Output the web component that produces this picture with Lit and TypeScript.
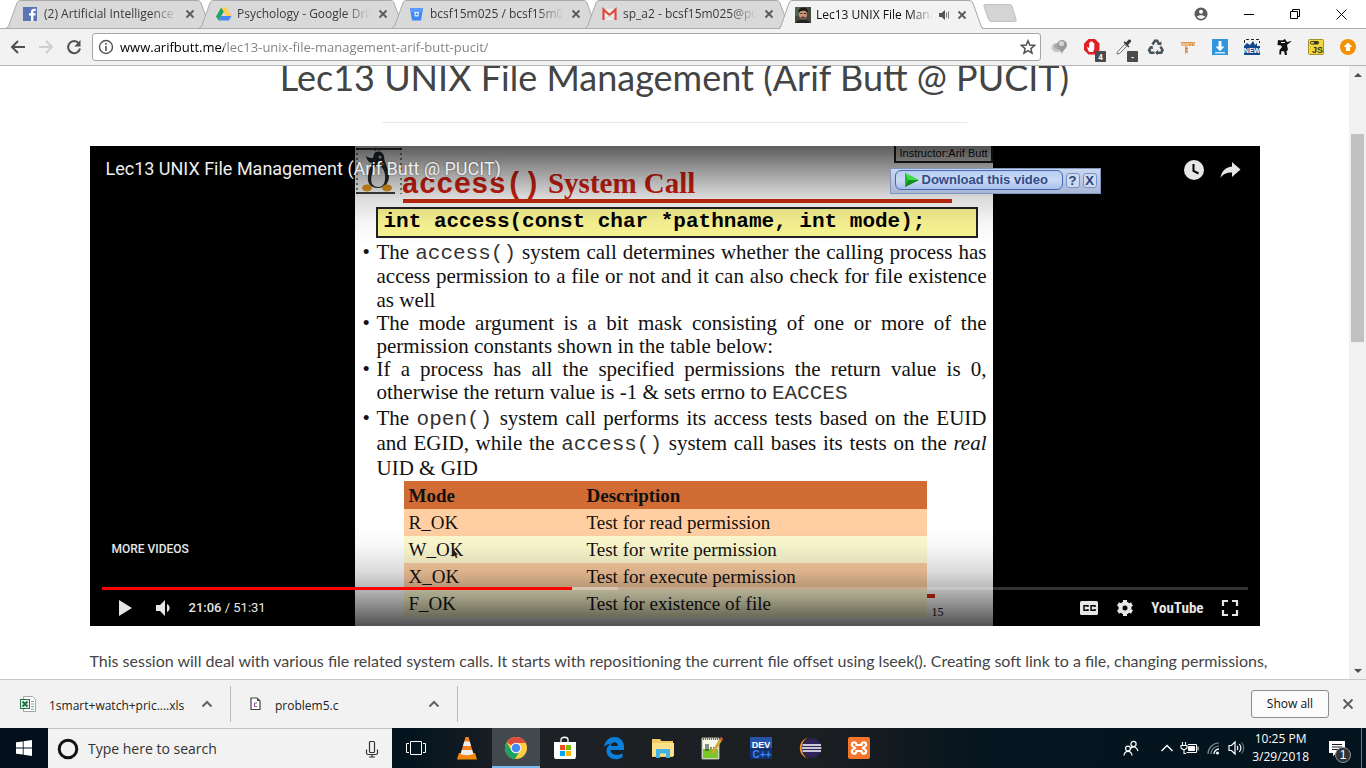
import { LitElement, html, css, svg, TemplateResult } from "lit";
import { customElement } from "lit/decorators.js";
import { classMap } from "lit/directives/class-map.js";
import { styleMap } from "lit/directives/style-map.js";

const icon = (w: number, h: number, body: TemplateResult) => html`
  <svg width=${w} height=${h} viewBox="0 0 ${w} ${h}" aria-hidden="true">${body}</svg>`;

const closeIcon = icon(10, 10, svg`<path d="M1.5 1.5l7 7M8.5 1.5l-7 7" stroke="#5a5a5a" stroke-width="1.8" fill="none"/>`);
const chevronUp = icon(12, 8, svg`<path d="M1.5 6.5L6 2l4.5 4.5" stroke="#5f6368" stroke-width="2" fill="none"/>`);

interface Tab {
  title: string;
  icon: TemplateResult;
  active?: boolean;
}

const tabs: Tab[] = [
  {
    title: "(2) Artificial Intelligence S",
    icon: icon(16, 16, svg`<rect y="1" width="14" height="14" fill="#5b74b4"/><path d="M8 15V9.500H6V7.300h2V5.600C8 3.700 9.200 2.800 11 2.800h1.800v2.200H11.500c-.8 0-1.100.4-1.100 1.100v1.200h2.300l-.3 2.200h-2V15z" fill="#fff"/>`),
  },
  {
    title: "Psychology - Google Drive",
    icon: icon(16, 16, svg`<path d="M5.200 1.500h5L15.500 10h-5z" fill="#ffd04b"/><path d="M5.200 1.500L0 10.500l2.500 4L7.800 5.700z" fill="#1fa463"/><path d="M5.200 10h10.300l-2.600 4.500H2.500z" fill="#4688f4"/>`),
  },
  {
    title: "bcsf15m025 / bcsf15m025",
    icon: icon(16, 16, svg`<path d="M1 2h13l-2 12.500H3z" fill="#3f86f7"/><path d="M1 2h13l-.8 4H1.700z" fill="#5b9bff"/><path d="M5 6h5.200l-.8 4.500H5.800z" fill="#dbe8ff"/><path d="M6.500 7.500h2.300l-.4 1.500H6.900z" fill="#2d6fe0"/>`),
  },
  {
    title: "sp_a2 - bcsf15m025@pucit",
    icon: icon(16, 16, svg`<path d="M1 3h13v11H1z" fill="#eee"/><path d="M1.500 14V3.500l6 5.500 6-5.500V14" fill="none" stroke="#dc4b3e" stroke-width="2.200"/><path d="M3 13l4.500-3.500L12 13" fill="none" stroke="#cfcfcf"/>`),
  },
  {
    title: "Lec13 UNIX File Management",
    active: true,
    icon: icon(16, 16, svg`<rect width="16" height="16" fill="#434a3c"/><rect width="6" height="9" fill="#56634d"/><ellipse cx="8" cy="7.500" rx="4" ry="5" fill="#c79479"/><path d="M3.500 6C3 2 5.500.8 8.300.8s5 1.500 4.200 5.200C11.500 4 10 3.700 8 3.800S4.500 4.300 3.500 6z" fill="#1d1714"/><path d="M5.800 10c1.500-.8 3-.8 4.400 0v1.200c-1.400.7-3 .7-4.400 0z" fill="#5c3f33"/><path d="M1 16c.5-2.500 3-3.300 7-3.300s6.500.8 7 3.300z" fill="#262024"/><path d="M5.500 6.500h2M9 6.500h2" stroke="#33211b"/>`),
  },
];

const extensions: { name: string; badge?: string; icon: TemplateResult }[] = [
  {
    name: "Places",
    icon: icon(18, 18, svg`<ellipse cx="6" cy="9.500" rx="5.500" ry="4.800" fill="#c9c9c9"/><ellipse cx="7" cy="8.500" rx="4" ry="3" fill="#a9a9a9"/><path d="M11 2a5 5 0 0 1 5 5c0 3.500-4 4.500-5 9-1.500-4.500-5-5.500-5-9a5 5 0 0 1 5-5z" fill="#9a9a9a"/><circle cx="10.500" cy="5.500" r="2.600" fill="#d2d2d2"/>`),
  },
  {
    name: "Ad blocker",
    badge: "4",
    icon: icon(18, 18, svg`<path d="M5.500 1h6.500l4.500 4.500V12L12 16.500H5.500L1 12V5.500z" fill="#e01f26"/><path d="M6 14L4 9.500l1-.5 1.200 1.500V4.500h1.200V8V3.500h1.300V8V3.800H10V8.300V5h1.300v6L10 14z" fill="#fff"/>`),
  },
  {
    name: "Colour picker",
    badge: "-",
    icon: icon(18, 18, svg`<path d="M2 16l.6-2.500 7-7 2 2-7 7z" fill="#eee" stroke="#777"/><path d="M8.500 4.500l5 5 1-1-1.500-1.500L15.800 4c1-1.500-.8-3.300-2.300-2.200L11 4.500 9.500 3.200z" fill="#3b3b3b"/>`),
  },
  {
    name: "Recycle",
    icon: icon(18, 18, svg`<g fill="none" stroke="#46545c" stroke-width="2.600"><path d="M5.500 6.500L8 2.800h2.200L12 5.800"/><path d="M13.500 8.500l2 3.700-1.300 2.600h-4"/><path d="M7.500 14.800H3.600l-1.500-2.500 2-3.500"/></g><path d="M10 6.800l4.300.4.200-4zM11 11.800v5.500l-3-2.600zM2 9.300l3.300-1.800 1 3.800z" fill="#46545c"/>`),
  },
  {
    name: "Page ruler",
    icon: icon(18, 18, svg`<path d="M2 4h14v4H9v7.500H6V8H2z" fill="#f0ba84"/><path d="M2 4h14v1H2zM6 8h1v7.500H6z" fill="#dd9350"/><path d="M11 6v1.500M13.500 6v1.500M7 10.500h1.500M7 13h1.500" stroke="#a8683a"/>`),
  },
  {
    name: "Downloader",
    icon: icon(18, 18, svg`<rect x="1" y="1" width="16" height="16" fill="#2f95dc"/><path d="M7.500 3h3v5.500h3L9 13.200 4.500 8.500h3z" fill="#fff"/><path d="M4 14.800h10" stroke="#fff" stroke-width="1.200"/>`),
  },
  {
    name: "Screenshot",
    icon: icon(18, 18, svg`<path d="M1.500 5V1.500h15V5" fill="none" stroke="#222" stroke-dasharray="3 2"/><path d="M1 8l3-3 3 2 3-4 2 4 2-2v3h3v9H1z" fill="#134a8e"/><text x="9" y="14.500" font-family="Liberation Sans" font-size="7" font-weight="bold" fill="#fff" text-anchor="middle">NEW</text>`),
  },
  {
    name: "Ninja",
    icon: icon(18, 18, svg`<path d="M3 2l4 .5L10 1l2 3 5-1-4 3-1 1 1 5-1.500 1 .5 4H9.800l-.6-3.500L6.500 13 6 16.500H4.300L4.500 12 7 9 6 7.500 2.500 7z" fill="#111"/><path d="M6 4.500h4" stroke="#f2f2f2"/>`),
  },
  {
    name: "Script switch",
    icon: icon(18, 18, svg`<rect x="1.500" y="1.500" width="15" height="15" rx="1" fill="#f1d63c" stroke="#a3912a"/><rect x="3" y="3" width="9" height="3.500" rx="1.700" fill="#3a3720"/><rect x="4" y="4" width="3" height="1.500" fill="#f1d63c"/><text x="10.500" y="15" font-family="Liberation Sans" font-size="9" font-weight="bold" fill="#37331c" text-anchor="middle">JS</text>`),
  },
  {
    name: "Update",
    icon: icon(18, 18, svg`<circle cx="9" cy="9" r="8" fill="#f39200"/><path d="M9 4.500l4.500 4.500H11v4H7V9H4.500z" fill="#fff"/>`),
  },
];

const modes = [
  ["R_OK", "Test for read permission"],
  ["W_OK", "Test for write permission"],
  ["X_OK", "Test for execute permission"],
  ["F_OK", "Test for existence of file"],
];

@customElement("browser-tabs")
class BrowserTabs extends LitElement {
  static styles = css`
    :host { display: flex; height: 29px; background: #fff; padding-left: 6px; box-sizing: border-box; border-bottom: 1px solid #adadad; font: 12px/16px "Open Sans", "Noto Sans", sans-serif; }
    .tab { position: relative; flex: 0 1 206px; min-width: 0; height: 28px; margin-right: -13px; padding: 0 17px; box-sizing: border-box; display: flex; align-items: center; gap: 5px; color: #3a3a3a; }
    .tab.active { color: #111; height: 29px; z-index: 1; }
    .shape { position: absolute; inset: 0; width: 100%; height: 100%; }
    .favicon, .title, .sound, .close { position: relative; display: flex; }
    .title { flex: 1; min-width: 0; overflow: hidden; white-space: nowrap; -webkit-mask-image: linear-gradient(90deg, #000 80%, transparent); mask-image: linear-gradient(90deg, #000 80%, transparent); }
    .close { border: 0; padding: 0; background: none; margin-left: 2px; }
    .new { border: 0; padding: 0; background: none; margin-left: 11px; }
    .window { margin-left: auto; padding-right: 2px; display: flex; align-items: center; }
    .window button { border: 0; padding: 0; background: none; width: 46px; height: 28px; display: flex; align-items: center; justify-content: center; }
    .window .person { width: 50px; }
  `;
  render() {
    return html`
      ${tabs.map((t) => html`
        <div class=${classMap({ tab: true, active: !!t.active })}>
          <svg class="shape" viewBox="0 0 206 28" preserveAspectRatio="none" aria-hidden="true">
            <path d="M0 28C2 27.500 2 27 3 25L11 3C12 1 13 .5 14 .5H191C193 .5 194 1 195 3L203 25C204 27 204 27.500 206 28z" fill=${t.active ? "#f2f2f2" : "#d9d9d9"}/>
            <path d="M0 28C2 27.500 2 27 3 25L11 3C12 1 13 .5 14 .5H191C193 .5 194 1 195 3L203 25C204 27 204 27.500 206 28" fill="none" stroke="#a9a9a9"/>
          </svg>
          <span class="favicon">${t.icon}</span>
          <span class="title">${t.title}</span>
          ${t.active ? html`<span class="sound">${icon(12, 12, svg`<path d="M1 4h2.500L7 1v10L3.500 8H1z" fill="#555"/><path d="M8.500 3.500v5M10.500 2.500v7" stroke="#777"/>`)}</span>` : ""}
          <button class="close" aria-label="Close tab">${closeIcon}</button>
        </div>`)}
      <button class="new" aria-label="New tab">${icon(36, 20, svg`<path d="M3 1.500H27C29 1.500 29.500 2 30 3L34 16C34.500 17.500 34 18.500 32.500 18.500H10C8 18.500 7 18 6.500 16.500L2 3.500C1.500 2.500 2 1.500 3 1.500z" fill="#d4d4d4" stroke="#c0c0c0"/>`)}</button>
      <div class="window">
        <button class="person" aria-label="Profile">${icon(14, 14, svg`<circle cx="7" cy="7" r="6.500" fill="#5a5a5a"/><circle cx="7" cy="4.800" r="2" fill="#fff"/><path d="M3 9.800c1-2 7-2 8 0-1 1.500-2.400 2-4 2s-3-.5-4-2z" fill="#fff"/>`)}</button>
        <button aria-label="Minimize">${icon(10, 10, svg`<path d="M0 5.500h10" stroke="#000"/>`)}</button>
        <button aria-label="Restore">${icon(10, 10, svg`<path d="M.5 2.500h7v7h-7zM2.500 2.500v-2h7v7h-2" fill="none" stroke="#000"/>`)}</button>
        <button aria-label="Close">${icon(11, 11, svg`<path d="M.5.5l10 10M10.500.5l-10 10" stroke="#000"/>`)}</button>
      </div>`;
  }
}

@customElement("browser-toolbar")
class BrowserToolbar extends LitElement {
  static styles = css`
    :host { display: flex; align-items: center; height: 37px; box-sizing: border-box; background: #f2f2f2; border-bottom: 1px solid #b6b6b6; padding: 0 9px 0 4px; font: 14px/20px "Open Sans", "Noto Sans", sans-serif; }
    button { border: 0; background: none; padding: 0; display: flex; align-items: center; justify-content: center; position: relative; }
    .nav button { width: 28px; height: 28px; }
    .nav { display: flex; margin-right: 4px; }
    .address { flex: 1; min-width: 0; display: flex; align-items: center; height: 28px; box-sizing: border-box; border: 1px solid #a6a6a6; border-radius: 3px; background: #fff; padding: 0 4px 0 5px; gap: 6px; margin-right: 10px; }
    .url { flex: 1; min-width: 0; border: 0; outline: 0; padding: 0; height: 20px; font: 13px/20px "Open Sans", "Noto Sans", sans-serif; color: transparent; background: linear-gradient(90deg, #000 104px, #808080 104px); -webkit-background-clip: text; background-clip: text; }
    .extensions { display: flex; gap: 14px; }
    .extensions button { width: 18px; height: 28px; }
    .badge { position: absolute; right: -5px; bottom: -1px; min-width: 11px; height: 11px; border-radius: 1px; background: #4b4b4b; color: #fff; font: bold 8px/11px "Open Sans", sans-serif; text-align: center; }
  `;
  render() {
    return html`
      <div class="nav">
        <button aria-label="Back">${icon(16, 16, svg`<path d="M15 8H2.500M8 2L2 8l6 6" fill="none" stroke="#505050" stroke-width="2"/>`)}</button>
        <button aria-label="Forward">${icon(16, 16, svg`<path d="M1 8h12.500M8 2l6 6-6 6" fill="none" stroke="#cfcfcf" stroke-width="2"/>`)}</button>
        <button aria-label="Reload">${icon(16, 16, svg`<path d="M12.800 4.300A6 6 0 1 0 14 9.500" fill="none" stroke="#505050" stroke-width="2"/><path d="M14.500 1v6.500H8.300z" fill="#505050"/>`)}</button>
      </div>
      <label class="address">
        ${icon(16, 16, svg`<circle cx="8" cy="8" r="6.500" fill="none" stroke="#555" stroke-width="1.400"/><path d="M8 7v5M8 4v1.800" stroke="#555" stroke-width="1.600"/>`)}
        <input class="url" type="text" aria-label="Address" .value=${"www.arifbutt.me/lec13-unix-file-management-arif-butt-pucit/"} />
        ${icon(16, 16, svg`<path d="M8 1.800l1.800 4.300 4.700.4-3.600 3.100 1.100 4.600L8 11.700l-4 2.500 1.100-4.600L1.500 6.500l4.700-.4z" fill="none" stroke="#505050" stroke-width="1.500"/>`)}
      </label>
      <div class="extensions">
        ${extensions.map((e) => html`<button aria-label=${e.name}>${e.icon}${e.badge ? html`<span class="badge">${e.badge}</span>` : ""}</button>`)}
      </div>`;
  }
}

@customElement("lecture-slide")
class LectureSlide extends LitElement {
  static styles = css`
    :host { display: block; position: relative; width: 638px; height: 480px; background: #fff; color: #111; box-sizing: border-box; overflow: hidden; font: 21px/24px "Liberation Serif", serif; }
    .head { display: flex; height: 53px; padding-left: 1px; }
    .penguin { padding-top: 2px; }
    h2 { margin: 0; padding-top: 21px; font: bold 29px/32px "Liberation Serif", serif; color: #d4210f; white-space: nowrap; }
    code { font-family: "Liberation Mono", monospace; line-height: 1; }
    .bar { height: 4px; margin: 0 41px 0 48px; background: #cc2c0c; }
    .instructor { position: absolute; top: 0; right: 0; padding: 0 3px; border: 2px solid #222; border-top: 0; background: #e4e4e4; font: 11px/15px "Liberation Sans", sans-serif; }
    .signature { display: block; height: 31px; box-sizing: border-box; margin: 4px 15px 2px 21px; padding: 0 6px; border: 2px solid #222; background: #faf592; font-weight: bold; line-height: 26px; color: #000; }
    ul { margin: 0; padding: 0 6px 0 22px; list-style: none; }
    li { position: relative; }
    li::before { content: "•"; position: absolute; left: -14px; }
    li span { display: block; text-align-last: justify; white-space: nowrap; }
    li .end { text-align-last: left; }
    li code { color: #333; }
    .plain { line-height: 23px; }
    .coded { line-height: 25px; padding-top: 2px; }
    table { margin-left: 49px; width: 523px; border-collapse: collapse; font-size: 19px; line-height: 27px; }
    th, td { padding: 0 5px; text-align: left; height: 27px; }
    .mode { width: 168px; }
    th { background: #d16d34; height: 28px; }
    tr { background: #ffcfa2; }
    tr:nth-child(even) { background: #fdfad0; }
    .page { position: absolute; left: 577px; top: 458px; font-size: 12px; line-height: 16px; }
    .dash { position: absolute; left: 572px; top: 448px; width: 8px; height: 4px; background: #d42a10; }
    .pointer { position: absolute; left: 97px; top: 403px; }
  `;
  render() {
    return html`
      <div class="head">
        <div class="penguin">${icon(46, 46, svg`
          <rect width="46" height="46" fill="#fff"/><path d="M1 0v46M45 0v46" stroke="#000" stroke-dasharray="2 3"/><path d="M0 1h46M0 45h39" stroke="#000" stroke-width="1.500"/>
          <path d="M18 6c2-4 9-3 10 2 0 7 5 12 5 20 0 7-4 12-11 12s-11-4-10-12c0-5 3-9 4-13-3 0-5-3-6-7 3 2 5 2 7 2z" fill="#252a30"/>
          <path d="M19 19c3-2 6-1 8 2 3 5 3 14-1 17-3 2-8 1-10-2-2-5 0-13 3-17z" fill="#eee"/><circle cx="24" cy="9" r="1.500" fill="#ddd"/>
          <path d="M20 3l-2-3M23 3l1-3" stroke="#333"/><ellipse cx="11" cy="40" rx="5" ry="3.500" fill="#e79a1d"/><ellipse cx="31" cy="40" rx="5" ry="3.500" fill="#e79a1d"/><path d="M24 14l5 2-4 2z" fill="#c9722b"/>`)}</div>
        <h2><code>access()</code> System Call</h2>
      </div>
      <div class="bar"></div>
      <div class="instructor">Instructor:Arif Butt</div>
      <code class="signature">int access(const char *pathname, int mode);</code>
      <ul>
        <li>
          <span>The <code>access()</code> system call determines whether the calling process has</span>
          <span>access permission to a file or not and it can also check for file existence</span>
          <span class="end">as well</span>
        </li>
        <li class="plain">
          <span>The mode argument is a bit mask consisting of one or more of the</span>
          <span class="end">permission constants shown in the table below:</span>
        </li>
        <li class="plain">
          <span>If a process has all the specified permissions the return value is 0,</span>
          <span class="end">otherwise the return value is -1 &amp; sets errno to <code>EACCES</code></span>
        </li>
        <li class="coded">
          <span>The <code>open()</code> system call performs its access tests based on the EUID</span>
          <span>and EGID, while the <code>access()</code> system call bases its tests on the <i>real</i></span>
          <span class="end">UID &amp; GID</span>
        </li>
      </ul>
      <table>
        <thead><tr><th class="mode">Mode</th><th>Description</th></tr></thead>
        <tbody>${modes.map(([m, d]) => html`<tr><td>${m}</td><td>${d}</td></tr>`)}</tbody>
      </table>
      <div class="dash"></div>
      <div class="page">15</div>
      <svg class="pointer" width="7" height="10" viewBox="0 0 9 13" aria-hidden="true"><path d="M1 0v10l2.500-2 1.500 4 2-1-1.500-3.500H8z" fill="#222"/></svg>`;
  }
}

@customElement("video-player")
class VideoPlayer extends LitElement {
  static styles = css`
    :host { display: grid; position: relative; height: 480px; background: #000; justify-items: center; color: #e6e6e6; font-family: Roboto, sans-serif; overflow: hidden; }
    lecture-slide { margin-right: 2px; }
    .shade { position: absolute; inset: 0; background: linear-gradient(180deg, rgba(0,0,0,.64), rgba(0,0,0,.38) 26px, rgba(0,0,0,.14) 52px, rgba(0,0,0,.04) 76px, transparent 100px), linear-gradient(0deg, rgba(0,0,0,.68), rgba(0,0,0,.35) 30px, rgba(0,0,0,.14) 54px, rgba(0,0,0,.03) 80px, transparent 100px); }
    .chrome { position: absolute; inset: 0; display: flex; flex-direction: column; }
    button { border: 0; background: none; padding: 0; display: flex; color: inherit; }
    .top { display: flex; gap: 14px; padding: 12px 19px 0 16px; }
    .name { flex: 1; font-size: 18px; line-height: 22px; color: #eee; text-shadow: 0 0 2px rgba(0,0,0,.5); text-decoration: none; }
    .more { margin-top: auto; padding: 0 22px; font-size: 12px; line-height: 16px; font-weight: 500; }
    .seek { appearance: none; -webkit-appearance: none; margin: 30px 12px 0; height: 3px; outline: 0; }
    .seek::-webkit-slider-thumb { -webkit-appearance: none; width: 0; height: 0; }
    .controls { display: flex; align-items: center; height: 36px; padding: 0 21px 0 27px; }
    .play { width: 38px; }
    .sound { width: 34px; }
    .time { flex: 1; font-size: 13px; line-height: 16px; font-weight: 500; }
    .total { font-weight: 400; }
    .right { display: flex; align-items: center; gap: 17px; }
    .brand { font: bold 15px/20px "Liberation Sans Narrow", "Roboto Condensed", Roboto, sans-serif; color: inherit; text-decoration: none; }
    .grab { position: absolute; left: 800px; top: 22px; width: 211px; height: 26px; box-sizing: border-box; display: flex; align-items: center; gap: 3px; padding: 0 3px 2px 4px; border: 1px solid #8095bd; background: linear-gradient(#c9d8f0, #a9b7d6); color: #324c86; }
    .grab .download { flex: 1; height: 20px; align-items: center; gap: 2px; padding: 0 8px; border: 1px solid #4a66ad; border-radius: 6px; background: linear-gradient(#b6cdf3, #ccdaf3 50%, #a7c0ec); font: bold 13px/18px "Liberation Sans", sans-serif; }
    .grab .small { width: 14px; height: 15px; justify-content: center; border: 1px solid #7b93c4; border-radius: 3px; background: #cddaf2; font: bold 13px/13px "Liberation Sans", sans-serif; color: #2c4479; }
  `;
  render() {
    const played = 41;
    const loaded = 45;
    const track = `linear-gradient(90deg, #f00 ${played}%, rgba(255,255,255,.45) ${played}% ${loaded}%, rgba(255,255,255,.2) ${loaded}%)`;
    return html`
      <lecture-slide></lecture-slide>
      <div class="shade"></div>
      <div class="chrome">
        <div class="top">
          <a class="name" href="#video">Lec13 UNIX File Management (Arif Butt @ PUCIT)</a>
          <button aria-label="Watch later">${icon(22, 24, svg`<circle cx="11" cy="12" r="10" fill="#e6e6e6"/><path d="M10.500 6v7l5 2.500" fill="none" stroke="#000" stroke-width="2"/>`)}</button>
          <button aria-label="Share">${icon(22, 24, svg`<path d="M13 4l8.500 7.500L13 19v-4.500C7.500 14.500 4 16 1.500 20 2.500 13.500 6 9.500 13 8.500z" fill="#e6e6e6"/>`)}</button>
        </div>
        <div class="more">MORE VIDEOS</div>
        <input class="seek" type="range" min="0" max="100" .value=${String(played)} aria-label="Seek" style=${styleMap({ background: track })} />
        <div class="controls">
          <button class="play" aria-label="Play">${icon(16, 18, svg`<path d="M2 1l13 8-13 8z" fill="#e6e6e6"/>`)}</button>
          <button class="sound" aria-label="Mute">${icon(18, 18, svg`<path d="M1 6h4l5-5v16l-5-5H1z" fill="#e6e6e6"/><path d="M12 5c3.500 1.500 3.500 6.500 0 8z" fill="#e6e6e6"/>`)}</button>
          <span class="time">21:06 <span class="total">/ 51:31</span></span>
          <div class="right">
            <button aria-label="Subtitles">${icon(20, 16, svg`<rect x="1" y="1" width="18" height="14" rx="1.500" fill="#e6e6e6"/><path d="M9 7V5.700H5v4.600h4V9M16 7V5.700h-4v4.600h4V9" fill="none" stroke="#000" stroke-width="1.400"/>`)}</button>
            <button aria-label="Settings">${icon(18, 18, svg`<circle cx="9" cy="9" r="4.500" fill="none" stroke="#e6e6e6" stroke-width="4"/><path d="M9 1v3M9 14v3M2 5l3 1.700M13 11.300l3 1.700M2 13l3-1.700M13 6.700L16 5" stroke="#e6e6e6" stroke-width="4"/>`)}</button>
            <a class="brand" href="#youtube">YouTube</a>
            <button aria-label="Full screen">${icon(18, 18, svg`<path d="M2 7V2h5M11 2h5v5M16 11v5h-5M7 16H2v-5" fill="none" stroke="#e6e6e6" stroke-width="2.200"/>`)}</button>
          </div>
        </div>
      </div>
      <div class="grab">
        <button class="download">${icon(16, 16, svg`<path d="M1 1l14 7-14 7z" fill="#22b52e"/><path d="M1 1l14 7H4.500z" fill="#3ee04a"/><path d="M4.500 8H15L1 15z" fill="#168a26"/>`)}Download this video</button>
        <button class="small" aria-label="Help">?</button>
        <button class="small" aria-label="Close panel">X</button>
      </div>`;
  }
}

@customElement("web-page")
class WebPage extends LitElement {
  static styles = css`
    :host { display: flex; flex: 1; min-height: 0; background: #fff; font-family: Lato, sans-serif; color: #444; overflow: hidden; }
    .view { flex: 1; min-width: 0; overflow: hidden; }
    article { width: calc(100% - 90px); max-width: 1170px; margin: -10px auto 0; }
    h1 { margin: 0; text-align: center; font-size: 36px; line-height: 42px; font-weight: 400; color: #444; }
    hr { width: 50%; border: 0; border-top: 1px solid #e8e8e8; margin: 24px auto 23px; }
    p { margin: 23px 0 0; font-size: 16px; line-height: 24px; white-space: nowrap; }
    .scroll { width: 17px; background: #f1f1f1; display: flex; flex-direction: column; align-items: center; }
    .scroll button { border: 0; padding: 0; background: none; width: 17px; height: 17px; display: flex; align-items: center; justify-content: center; }
    .track { flex: 1; width: 13px; padding-top: 51px; }
    .thumb { height: 208px; background: #c1c1c1; }
  `;
  render() {
    return html`
      <div class="view">
        <article>
          <h1>Lec13 UNIX File Management (Arif Butt @ PUCIT)</h1>
          <hr />
          <video-player></video-player>
          <p>This session will deal with various file related system calls. It starts with repositioning the current file offset using lseek(). Creating soft link to a file, changing permissions,</p>
        </article>
      </div>
      <div class="scroll">
        <button aria-label="Scroll up">${icon(8, 4, svg`<path d="M0 4l4-4 4 4z" fill="#505050"/>`)}</button>
        <div class="track"><div class="thumb"></div></div>
        <button aria-label="Scroll down">${icon(8, 4, svg`<path d="M0 0l4 4 4-4z" fill="#505050"/>`)}</button>
      </div>`;
  }
}

@customElement("download-shelf")
class DownloadShelf extends LitElement {
  static styles = css`
    :host { display: flex; align-items: center; height: 49px; box-sizing: border-box; border-top: 1px solid #c8c8c8; background: #f2f2f2; padding-right: 12px; color: #222; font: 12px/16px "Open Sans", "Noto Sans", sans-serif; }
    .item { display: flex; align-items: center; width: 227px; height: 36px; box-sizing: border-box; border-right: 1px solid #b9b9b9; padding: 0 17px 0 18px; }
    .item:first-child { width: 231px; padding-left: 19px; }
    .file { flex: 1; display: flex; align-items: center; gap: 12px; color: inherit; text-decoration: none; }
    .label { padding-top: 4px; }
    button { border: 0; background: none; padding: 0; display: flex; }
    .all { margin-left: auto; margin-right: 13px; width: 78px; height: 28px; justify-content: center; align-items: center; border: 1px solid #8c8c8c; border-radius: 3px; background: #fbfbfb; color: #111; font: 12px/16px "Open Sans", "Noto Sans", sans-serif; }
  `;
  render() {
    return html`
      <div class="item">
        <a class="file" href="#xls">${icon(18, 18, svg`<path d="M4.500 1.500h9l3 3v12h-12z" fill="#fff" stroke="#a5a5a5"/><path d="M12 6.500h3M12 9h3M12 11.500h3M12 14h3" stroke="#6fae8b"/><rect x="1.500" y="4.500" width="9" height="9" fill="#e9f3ed" stroke="#217346"/><path d="M3.500 6.500l5 5M8.500 6.500l-5 5" stroke="#217346" stroke-width="2"/>`)}<span class="label">1smart+watch+pric....xls</span></a>
        <button aria-label="File options">${chevronUp}</button>
      </div>
      <div class="item">
        <a class="file" href="#c">${icon(14, 18, svg`<path d="M2 3h6l3 3v8.500H2z" fill="#fff" stroke="#444" stroke-width="1.200"/><path d="M8 3v3h3z" fill="#444"/><path d="M8 8H5.500v3.500H8" fill="none" stroke="#9540a5"/>`)}<span class="label">problem5.c</span></a>
        <button aria-label="File options">${chevronUp}</button>
      </div>
      <button class="all">Show all</button>
      <button aria-label="Close downloads">${icon(12, 12, svg`<path d="M1.500 1.500l9 9M10.500 1.500l-9 9" stroke="#5a5a5a" stroke-width="1.800" fill="none"/>`)}</button>`;
  }
}

const apps: { name: string; active?: boolean; icon: TemplateResult }[] = [
  { name: "Task view", icon: icon(20, 16, svg`<path d="M4.500 1.500h11v13h-11zM3 3.500H.5v9H3M17 3.500h2.500v9H17" fill="none" stroke="#fff"/>`) },
  { name: "VLC", icon: icon(24, 24, svg`<path d="M4 17h16l2 6.500H2z" fill="#f38a00"/><path d="M10.500 1h3L19 20c-3 2-11 2-14 0z" fill="#f58220"/><path d="M9.300 5.500h5.400l1.300 4.500H8zM6.800 14h10.400l1.200 4c-3 1.500-10 1.500-12.800 0z" fill="#ededed"/>`) },
  { name: "Chrome", active: true, icon: icon(24, 24, svg`<circle cx="12" cy="12" r="11" fill="#ffcd40"/><path d="M12 12L2.500 6.500A11 11 0 0 1 21.800 7H12z" fill="#dd4b3e"/><path d="M2.500 6.500A11 11 0 0 0 11 23l5-8.500-8.300.2z" fill="#1ba261"/><circle cx="12" cy="12" r="5.300" fill="#fff"/><circle cx="12" cy="12" r="4.300" fill="#4587f3"/>`) },
  { name: "Store", icon: icon(24, 24, svg`<path d="M8 7V3.500c0-3 7-3 7 0V7" fill="none" stroke="#fff" stroke-width="1.300"/><path d="M1 6h22v15l-1 2H2l-1-2z" fill="#fff"/><path d="M7 9h5v5H7z" fill="#f25022"/><path d="M13 9h5v5h-5z" fill="#7fba00"/><path d="M7 15h5v5H7z" fill="#00a4ef"/><path d="M13 15h5v5h-5z" fill="#ffb900"/>`) },
  { name: "Edge", icon: icon(24, 24, svg`<path d="M2 11C3 4 8 1 12.500 1 18.500 1 22 5.500 22 11v3H8.500c0 5 7.500 6 12 3.200v4C12 26 4.500 21.500 4.500 15c0-3.500 2-6 4.500-7.500-3.500.5-6 2-7 3.500zM8.800 10H16c0-5-6.500-5-7.200 0z" fill="#0a7fdc"/>`) },
  { name: "File Explorer", icon: icon(24, 24, svg`<path d="M1 3h8l1.500 2H22v16H1z" fill="#f2cc60"/><path d="M1 7h22v13H1z" fill="#ffe08a"/><path d="M5 13h14v9h-4v-4.500H9V22H5z" fill="#3fb2e6"/>`) },
  { name: "Notepad++", icon: icon(24, 24, svg`<path d="M2 2h17v21H2z" fill="#f4f6ea" stroke="#a9b29a"/><path d="M3 13h15v9H3z" fill="#7ac528"/><path d="M3 3h15" stroke="#666" stroke-dasharray="1 1" stroke-width="2"/><path d="M6 8v7M8 8v7M10 12h2M13 12h2" stroke="#222"/><path d="M21 1l2 2-9 14-2.500 1 .5-3z" fill="#d7a434"/><path d="M21 1l2 2-1.200 2-2.200-2z" fill="#c34a3a"/>`) },
  { name: "Dev-C++", icon: icon(24, 24, svg`<rect x="1" y="1" width="22" height="22" fill="#2453a8"/><rect x="1" y="12" width="22" height="11" fill="#14316f"/><text x="12" y="11.500" text-anchor="middle" font-family="Liberation Sans" font-size="9" font-weight="bold" fill="#fff">DEV</text><text x="13" y="22" text-anchor="middle" font-family="Liberation Sans" font-size="10" font-weight="bold" fill="#3d87f0">C++</text>`) },
  { name: "Eclipse", icon: icon(24, 24, svg`<path d="M10 1.500a10.800 10.800 0 0 0 0 21 12 12 0 0 1 0-21z" fill="#f7941e"/><circle cx="13.500" cy="12" r="10" fill="#2e2358"/><path d="M4.500 9h18.500M3.800 12h19.500M4.500 15h18.500" stroke="#fff" stroke-width="1.500"/>`) },
  { name: "XAMPP", icon: icon(24, 24, svg`<rect x="1" y="1" width="22" height="22" rx="2" fill="#f4752b"/><path d="M9.500 8.500C9 5 4 6 5 9.500L8 12l-3 2.500c-1 3.500 4 4.500 4.500 1V15h5v.5c.5 3.500 5.500 2.500 4.500-1L16 12l3-2.500c1-3.500-4-4.500-4.500-1V9h-5z" fill="none" stroke="#fff" stroke-width="2.200"/>`) },
];

@customElement("task-bar")
class TaskBar extends LitElement {
  static styles = css`
    :host { display: flex; height: 40px; background: linear-gradient(90deg, #03101b, #04141f 30%, #1d2024 38%, #1c1f22 60%, #05141e 72%, #04141f); color: #fff; font: 12px/18px "Open Sans", "Noto Sans", sans-serif; }
    button { border: 0; background: none; padding: 0; color: inherit; display: flex; align-items: center; justify-content: center; }
    .start { width: 48px; }
    .search { width: 344px; box-sizing: border-box; display: flex; align-items: center; gap: 9px; padding: 0 13px 0 9px; background: #f2f2f2; border-top: 1px solid #c3c3c3; }
    .search input { flex: 1; min-width: 0; border: 0; outline: 0; background: none; padding: 0; font: 14px/20px "Open Sans", "Noto Sans", sans-serif; }
    .search input::placeholder { color: #333; opacity: 1; }
    .apps { display: flex; gap: 1px; }
    .apps button { width: 48px; border-bottom: 2px solid transparent; box-sizing: border-box; padding-top: 2px; }
    .apps button:first-child { margin-right: 2px; }
    .apps .active { background: #41494f; border-color: #76b9ed; }
    .tray { margin-left: auto; margin-right: 6px; display: flex; align-items: center; gap: 6px; }
    .tray button { height: 40px; }
    .people { margin-right: 15px; }
    .clock { text-align: center; padding-right: 4px; }
    .notes { position: relative; width: 36px; }
    .count { position: absolute; left: 16px; top: 19px; width: 14px; height: 14px; border: 1px solid #8c9296; border-radius: 50%; background: #2d3336; font-size: 12px; line-height: 14px; text-align: center; }
    .desktop { width: 4px; border-left: 1px solid #6d767c; }
  `;
  render() {
    return html`
      <button class="start" aria-label="Start">${icon(16, 16, svg`<path d="M0 2.300L6.800 1.400v6.200H0zM7.600 1.300L16 0v7.600H7.600zM0 8.400h6.800v6.200L0 13.700zM7.600 8.400H16V16l-8.400-1.200z" fill="#fff"/>`)}</button>
      <label class="search">
        ${icon(22, 22, svg`<circle cx="11" cy="11" r="8.800" fill="none" stroke="#111" stroke-width="3"/>`)}
        <input type="text" placeholder="Type here to search" aria-label="Search" />
        ${icon(14, 18, svg`<rect x="4.500" y="1.500" width="5" height="11" rx="1" fill="none" stroke="#333" stroke-width="1.200"/><path d="M1.500 9.500v3.500c0 1 .6 1.500 1.500 1.500h8c1 0 1.500-.5 1.500-1.500V9.500M7 14.500V17M4 17h6" fill="none" stroke="#333" stroke-width="1.200"/>`)}
      </label>
      <div class="apps">
        ${apps.map((a) => html`<button class=${classMap({ active: !!a.active })} aria-label=${a.name}>${a.icon}</button>`)}
      </div>
      <div class="tray">
        <button class="people" aria-label="People">${icon(16, 16, svg`<g fill="none" stroke="#fff" stroke-width="1.200"><circle cx="10.500" cy="4" r="2.600"/><path d="M7.500 9c1-3 6-3 7.500 2"/><circle cx="5" cy="8.500" r="2.400"/><path d="M1 15.500c.5-5.500 7.500-5.500 8 0"/></g>`)}</button>
        <button aria-label="Hidden icons">${icon(14, 10, svg`<path d="M1.500 8L7 2.500 12.500 8" fill="none" stroke="#fff" stroke-width="1.400"/>`)}</button>
        <button aria-label="Battery">${icon(20, 14, svg`<path d="M2.500 1v3M5.500 1v3M1 4.500h6v2.500L5 8.500H3L1 7zM4 8v4.500h2" fill="none" stroke="#fff" stroke-width="1.100"/><path d="M8 3.500h8.500v8H6.500" fill="none" stroke="#fff"/><path d="M8.500 5.500h6v4h-6zM18 5.500v4" fill="#fff" stroke="#fff"/>`)}</button>
        <button aria-label="Network">${icon(16, 16, svg`<g fill="none" stroke="#7b868d" stroke-width="1.200"><path d="M2 14A11 11 0 0 1 13 3"/><path d="M5 14a8 8 0 0 1 8-8"/></g><path d="M8 14a5 5 0 0 1 5-5" fill="none" stroke="#fff" stroke-width="1.300"/><circle cx="11.500" cy="13" r="1.500" fill="#fff"/>`)}</button>
        <button aria-label="Volume">${icon(18, 16, svg`<path d="M1 5.500h2.500L7 2v12L3.500 10.500H1z" fill="none" stroke="#fff" stroke-width="1.200"/><path d="M9 6c1 1 1 3 0 4M11.300 4c2 2.500 2 5.500 0 8" fill="none" stroke="#fff" stroke-width="1.200"/><path d="M13.500 2.500c3 3.500 3 7.500 0 11" fill="none" stroke="#89939a"/>`)}</button>
        <div class="clock"><div>10:25 PM</div><div>3/29/2018</div></div>
        <button class="notes" aria-label="Notifications">${icon(18, 18, svg`<path d="M1 2h16v12H8l-3 3.500V14H1z" fill="#fff"/><path d="M4 5.500h10M4 8h10M4 10.500h7" stroke="#111a20"/>`)}<span class="count">1</span></button>
      </div>
      <div class="desktop"></div>`;
  }
}

@customElement("app-root")
class AppRoot extends LitElement {
  static styles = css`
    :host { display: flex; flex-direction: column; height: 100vh; overflow: hidden; }
  `;
  render() {
    return html`
      <browser-tabs></browser-tabs>
      <browser-toolbar></browser-toolbar>
      <web-page></web-page>
      <download-shelf></download-shelf>
      <task-bar></task-bar>`;
  }
}
